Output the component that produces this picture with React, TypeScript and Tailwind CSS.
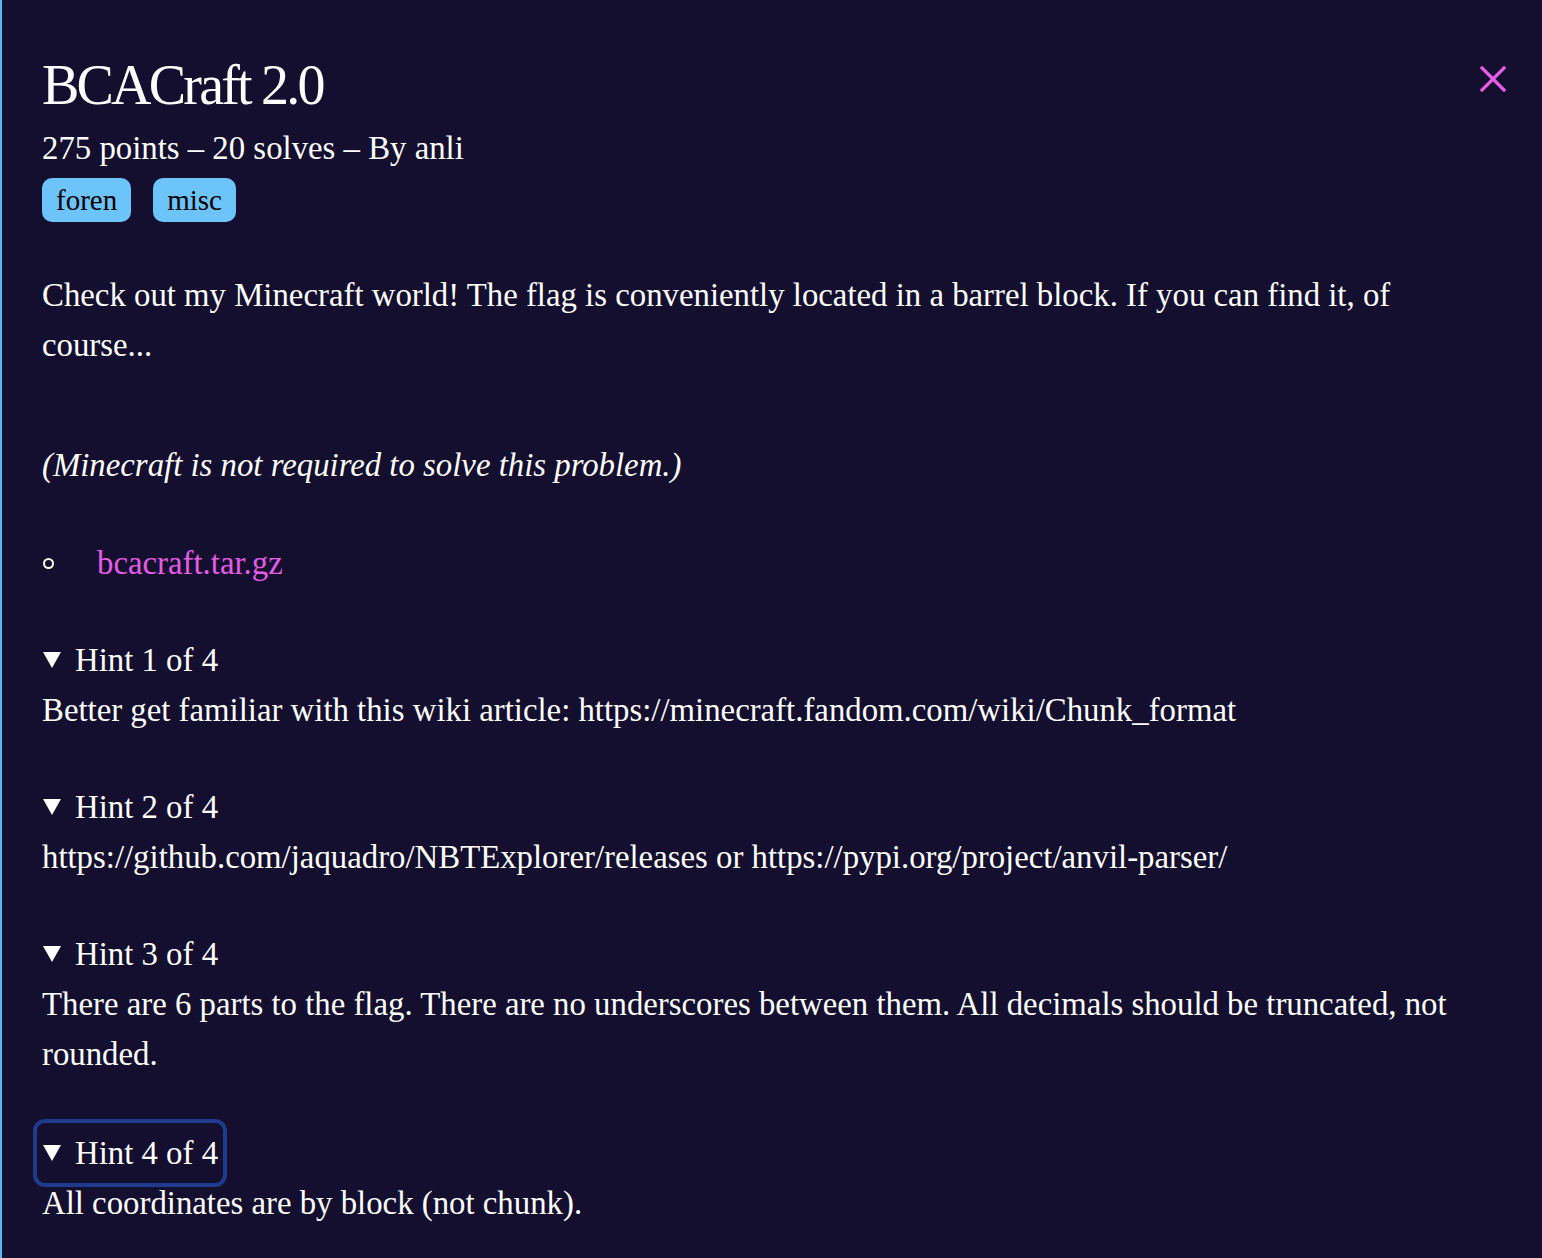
import React from "react";

function Triangle() {
  return (
    <svg width="20" height="18" viewBox="0 0 20 18" className="mr-[13px] shrink-0" aria-hidden>
      <polygon points="1,1 19,1 10,17" fill="#ffffff" />
    </svg>
  );
}

function Hint({ n, children, focused = false }: { n: number; children: React.ReactNode; focused?: boolean }) {
  return (
    <div className={focused ? "mt-[49px]" : "mt-[47px]"}>
      <div
        className={
          "flex w-fit items-center h-[50px] " +
          (focused ? "outline-[4px] outline-solid outline-[#1f3c8c] outline-offset-[5px] rounded-[3px]" : "")
        }
      >
        <Triangle />
        <span>Hint {n} of 4</span>
      </div>
      <div>{children}</div>
    </div>
  );
}

export default function App() {
  return (
    <div
      className="min-h-[1258px] w-full bg-[#140f2e] text-white border-l-[2px] border-[#5fb3f2] relative"
      style={{ fontFamily: '"Liberation Serif", "Times New Roman", serif' }}
    >
      <button className="absolute right-[36px] top-[66px] w-[26px] h-[26px]" aria-label="close">
        <svg width="26" height="26" viewBox="0 0 26 26">
          <path d="M2 2 L24 24 M24 2 L2 24" stroke="#e85ce8" strokeWidth="3.2" strokeLinecap="square" />
        </svg>
      </button>
      <div className="pl-[40px] pr-[42px] pt-[55px] pb-[30px] text-[32.8px] leading-[50px]">
        <h1 className="text-[56px] leading-[60px] tracking-[-0.05em] font-normal">BCACraft 2.0</h1>
        <div className="mt-[8px] leading-[50px]">275 points – 20 solves – By anli</div>
        <div className="flex gap-[22px] mt-[5px]">
          <span className="h-[44px] px-[14px] rounded-[10px] bg-[#6cc4fa] text-black text-[29px] leading-[44px]">foren</span>
          <span className="h-[44px] px-[14px] rounded-[10px] bg-[#6cc4fa] text-black text-[29px] leading-[44px]">misc</span>
        </div>
        <p className="mt-[48px]">
          Check out my Minecraft world! The flag is conveniently located in a barrel block. If you can find it, of course...
        </p>
        <p className="mt-[70px] italic">(Minecraft is not required to solve this problem.)</p>
        <ul className="mt-[48px]">
          <li className="flex items-center h-[50px]">
            <span className="w-[11px] h-[11px] rounded-full border-[2px] border-white ml-[1px] mr-[43px] shrink-0"></span>
            <a className="text-[#e35ce6]" href="#">bcacraft.tar.gz</a>
          </li>
        </ul>
        <Hint n={1}>Better get familiar with this wiki article: https://minecraft.fandom.com/wiki/Chunk_format</Hint>
        <Hint n={2}>https://github.com/jaquadro/NBTExplorer/releases or https://pypi.org/project/anvil-parser/</Hint>
        <Hint n={3}>
          There are 6 parts to the flag. There are no underscores between them. All decimals should be truncated, not rounded.
        </Hint>
        <Hint n={4} focused>
          All coordinates are by block (not chunk).
        </Hint>
      </div>
    </div>
  );
}
